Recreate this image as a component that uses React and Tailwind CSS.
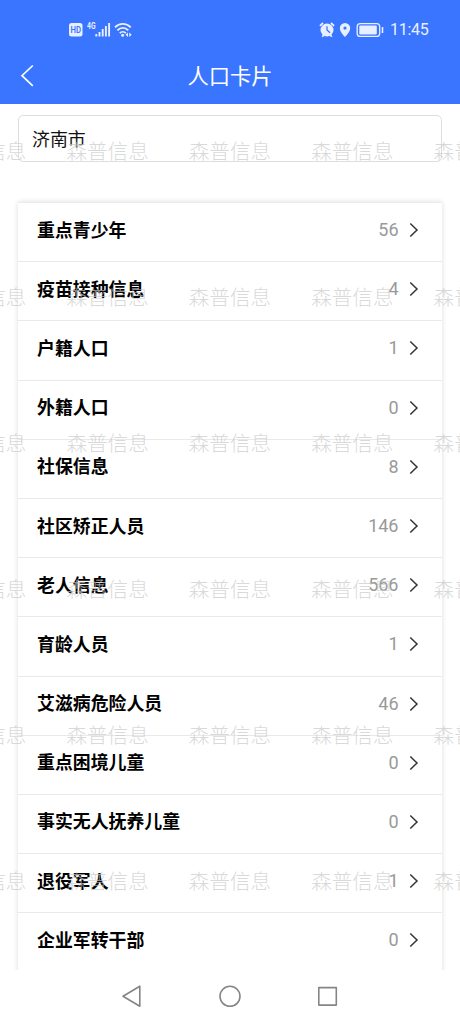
const rows = [
  ['重点青少年', 56],
  ['疫苗接种信息', 4],
  ['户籍人口', 1],
  ['外籍人口', 0],
  ['社保信息', 8],
  ['社区矫正人员', 146],
  ['老人信息', 566],
  ['育龄人员', 1],
  ['艾滋病危险人员', 46],
  ['重点困境儿童', 0],
  ['事实无人抚养儿童', 0],
  ['退役军人', 1],
  ['企业军转干部', 0],
];

function StatusBar() {
  return (
    <div className="flex h-[50px] items-center justify-between pt-[9px] pr-[32px] pl-[69px] text-[#e8efff]">
      <div className="flex items-center">
        <svg width="64" height="18" viewBox="0 0 64 18" fill="none">
          <rect x="0" y="2" width="13.5" height="13.5" rx="2.5" fill="currentColor" />
          <text x="6.8" y="12" textAnchor="middle" fontSize="9" fontWeight="600" fill="#3a75ff" fontFamily="Roboto, sans-serif" textLength="10.5" lengthAdjust="spacingAndGlyphs">HD</text>
          <text x="18" y="8" fontSize="8.5" fontWeight="700" fill="currentColor" fontFamily="Roboto, sans-serif" textLength="8.5" lengthAdjust="spacingAndGlyphs">4G</text>
          <path d="M27.3 13v2.5M30.5 11v4.5M33.7 8v7.5M36.9 5v10.5M40.1 2v13.5" stroke="currentColor" strokeWidth="1.9" />
          <path d="M46 6.3c4.5-4.6 11.2-4.6 15.7 0M48.400 9.300c3.200-3.200 7.700-3.200 10.900 0M50.800 12.100c1.700-1.700 4.300-1.700 6 0" stroke="currentColor" strokeWidth="1.900" />
          <circle cx="53.600" cy="14.200" r="1.500" fill="currentColor" />
          <path d="m59 11.500-2.500 2.300 2.500 2.300zM60.200 11.500l2.500 2.300-2.500 2.300z" fill="currentColor" />
        </svg>
      </div>
      <div className="flex items-center">
        <svg width="65" height="18" viewBox="0 0 65 18" fill="none">
          <circle cx="8" cy="9" r="6.500" fill="currentColor" />
          <path d="M.9 4.800 4 2M15.100 4.800 12 2M3.300 15.700l1.700-2.200M12.700 15.700 11 13.500" stroke="currentColor" strokeWidth="1.800" />
          <path d="M8 5.200V9l3 2.800" stroke="#3a75ff" strokeWidth="1.300" />
          <path fillRule="evenodd" d="M26 2a5.200 5.200 0 0 0-5.200 5.200C20.800 11 26 16 26 16s5.200-5 5.200-8.800A5.200 5.200 0 0 0 26 2Zm0 3.500a1.600 1.600 0 1 1 0 3.200 1.600 1.600 0 0 1 0-3.200Z" fill="currentColor" />
          <rect x="38.200" y="2.700" width="22.500" height="12.700" rx="3" stroke="currentColor" strokeWidth="1.300" />
          <rect x="40.300" y="4.600" width="17.500" height="8.900" rx="1" fill="currentColor" />
          <path d="M63.500 6v6" stroke="currentColor" strokeWidth="1.600" />
        </svg>
        <span className="ml-[6px] w-[38px] text-[16px] leading-[18px] tracking-[-0.3px] whitespace-nowrap">11:45</span>
      </div>
    </div>
  );
}

function WatermarkLayer() {
  return (
    <div aria-hidden="true" className="pointer-events-none absolute inset-x-0 top-[103px] h-[867px] overflow-hidden">
      <div className="-ml-[56px] flex flex-col pt-[34px] text-[20.6px] font-light text-[#c8c8c8]/70">
        {[0, 1, 2, 3, 4, 5].map((r) => (
          <div key={r} className="flex h-[146px] leading-[30px]">
            {[0, 1, 2, 3, 4].map((c) => (
              <span key={c} className="w-[122.400px] shrink-0 whitespace-nowrap">森普信息</span>
            ))}
          </div>
        ))}
      </div>
    </div>
  );
}

export default function App() {
  return (
    <div className="relative flex h-[1022px] w-[460px] flex-col overflow-hidden bg-white font-[Roboto,'Noto_Sans_CJK_SC',sans-serif]">
      <header className="h-[103.500px] shrink-0 bg-[#3a75ff] text-white">
        <StatusBar />
        <div className="grid h-[52px] grid-cols-[60px_1fr_60px] items-center">
          <svg className="ml-[20px]" width="15" height="24" viewBox="0 0 15 24" fill="none">
            <path d="M12.800 1.500 2 11.700l10.800 10.200" stroke="currentColor" strokeWidth="1.700" />
          </svg>
          <h1 className="pt-[1px] text-center text-[21.300px] leading-[30px] font-normal">人口卡片</h1>
        </div>
      </header>
      <main className="h-[866.500px] overflow-hidden px-[18px] pt-[11.500px]">
        <div className="flex h-[47px] items-center rounded-[5px] border border-[#dedede] px-[13px] pt-[4px] text-[17.900px] text-[#111]">济南市</div>
        <ul className="mt-[40px] h-[830px] border-t border-[#ececec] bg-white shadow-[0_0_5px_rgba(0,0,0,0.14)]">
          {rows.map(([label, count]) => (
            <li key={label} className="flex h-[59.200px] items-center border-b border-[#e9e9e9] pr-[23.500px] pb-[4px] pl-[19px]">
              <span className="flex-1 text-[17.900px] leading-[27px] font-bold text-black">{label}</span>
              <span className="text-[18px] leading-[24px] text-[#999]">{count}</span>
              <svg className="ml-[10px]" width="10" height="16" viewBox="0 0 10 16" fill="none">
                <path d="m1.300 1.500 6.700 6.500-6.700 6.500" stroke="#333" strokeWidth="1.500" />
              </svg>
            </li>
          ))}
        </ul>
      </main>
      <nav className="flex h-[52px] shrink-0 items-center justify-center gap-[75px] bg-white text-[#858585]">
        <svg width="22" height="24" viewBox="0 0 22 24" fill="none" stroke="currentColor" strokeWidth="1.600" strokeLinejoin="round">
          <path d="M18.800 2.200v20L2 12.200z" />
        </svg>
        <svg width="24" height="24" viewBox="0 0 24 24" fill="none" stroke="currentColor" strokeWidth="1.600">
          <circle cx="12" cy="12.300" r="10" />
        </svg>
        <svg width="22" height="24" viewBox="0 0 22 24" fill="none" stroke="currentColor" strokeWidth="1.600" strokeLinejoin="round">
          <path d="M1.800 3.600h17.500v17.500H1.800z" />
        </svg>
      </nav>
      <WatermarkLayer />
    </div>
  );
}
